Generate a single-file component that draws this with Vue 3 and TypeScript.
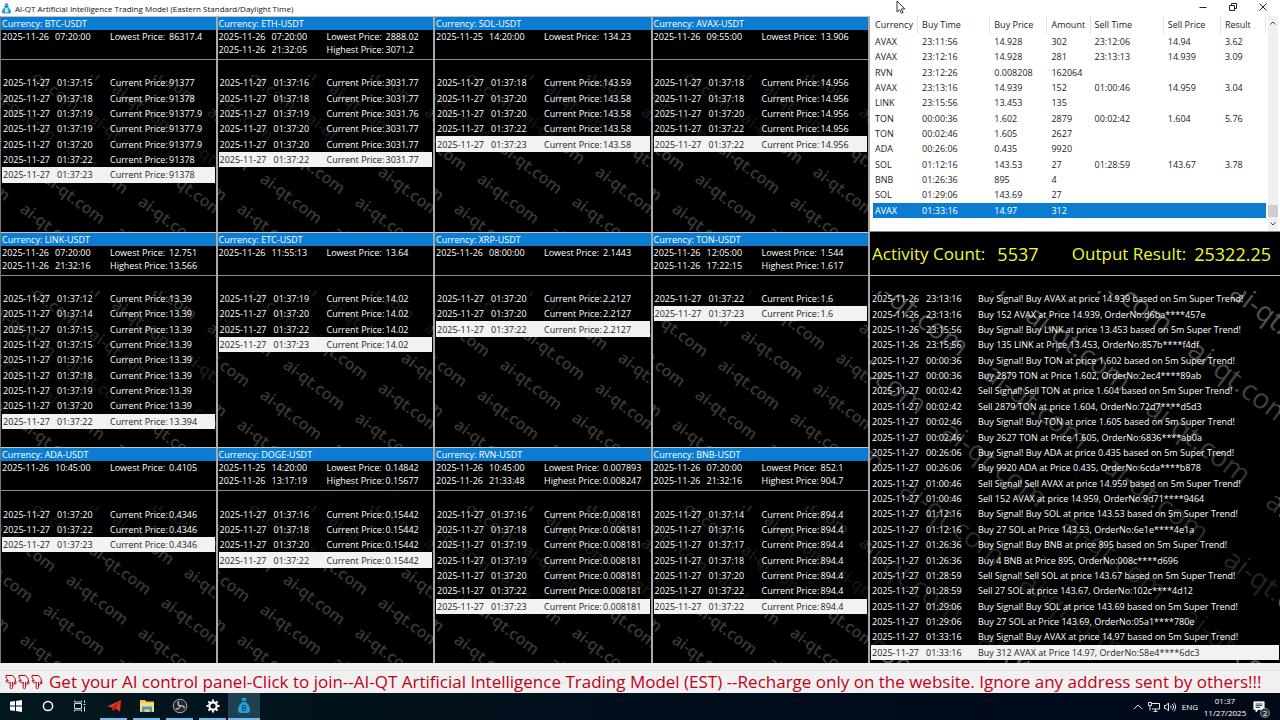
<script setup lang="ts">
interface Quote { date: string; time: string; price: string }
interface Stat { date: string; time: string; label: string; value: string }
interface Panel { pair: string; stats: Stat[]; quotes: Quote[] }

const DAY = '2025-11-27'

function stat(label: string, [at, value]: string[]): Stat {
  const [date, time] = at.split(' ')
  return { date, time, label, value }
}

function panel(pair: string, low: string[], high: string[] | null, ticks: string): Panel {
  const stats = [stat('Lowest Price:', low)]
  if (high) stats.push(stat('Highest Price:', high))
  const quotes = ticks.split(' ').map((t) => {
    const [sec, price] = t.split('/')
    return { date: DAY, time: `01:37:${sec}`, price }
  })
  return { pair, stats, quotes }
}

const panels: Panel[] = [
  panel('BTC-USDT', ['2025-11-26 07:20:00', '86317.4'], null,
    '15/91377 18/91378 19/91377.9 19/91377.9 20/91377.9 22/91378 23/91378'),
  panel('ETH-USDT', ['2025-11-26 07:20:00', '2888.02'], ['2025-11-26 21:32:05', '3071.2'],
    '16/3031.77 18/3031.77 19/3031.76 20/3031.77 20/3031.77 22/3031.77'),
  panel('SOL-USDT', ['2025-11-25 14:20:00', '134.23'], null,
    '18/143.59 20/143.58 20/143.58 22/143.58 23/143.58'),
  panel('AVAX-USDT', ['2025-11-26 09:55:00', '13.906'], null,
    '18/14.956 18/14.956 20/14.956 22/14.956 22/14.956'),
  panel('LINK-USDT', ['2025-11-26 07:20:00', '12.751'], ['2025-11-26 21:32:16', '13.566'],
    '12/13.39 14/13.39 15/13.39 15/13.39 16/13.39 18/13.39 19/13.39 20/13.39 22/13.394'),
  panel('ETC-USDT', ['2025-11-26 11:55:13', '13.64'], null,
    '19/14.02 20/14.02 22/14.02 23/14.02'),
  panel('XRP-USDT', ['2025-11-26 08:00:00', '2.1443'], null,
    '20/2.2127 20/2.2127 22/2.2127'),
  panel('TON-USDT', ['2025-11-26 12:05:00', '1.544'], ['2025-11-26 17:22:15', '1.617'],
    '22/1.6 23/1.6'),
  panel('ADA-USDT', ['2025-11-26 10:45:00', '0.4105'], null,
    '20/0.4346 22/0.4346 23/0.4346'),
  panel('DOGE-USDT', ['2025-11-25 14:20:00', '0.14842'], ['2025-11-26 13:17:19', '0.15677'],
    '16/0.15442 18/0.15442 20/0.15442 22/0.15442'),
  panel('RVN-USDT', ['2025-11-26 10:45:00', '0.007893'], ['2025-11-26 21:33:48', '0.008247'],
    '16/0.008181 18/0.008181 19/0.008181 19/0.008181 20/0.008181 22/0.008181 23/0.008181'),
  panel('BNB-USDT', ['2025-11-26 07:20:00', '852.1'], ['2025-11-26 21:32:16', '904.7'],
    '14/894.4 16/894.4 17/894.4 18/894.4 20/894.4 22/894.4 22/894.4'),
]

const columns = ['Currency', 'Buy Time', 'Buy Price', 'Amount', 'Sell Time', 'Sell Price', 'Result']
const trades: string[][] = [
  ['AVAX', '23:11:56', '14.928', '302', '23:12:06', '14.94', '3.62'],
  ['AVAX', '23:12:16', '14.928', '281', '23:13:13', '14.939', '3.09'],
  ['RVN', '23:12:26', '0.008208', '162064', '', '', ''],
  ['AVAX', '23:13:16', '14.939', '152', '01:00:46', '14.959', '3.04'],
  ['LINK', '23:15:56', '13.453', '135', '', '', ''],
  ['TON', '00:00:36', '1.602', '2879', '00:02:42', '1.604', '5.76'],
  ['TON', '00:02:46', '1.605', '2627', '', '', ''],
  ['ADA', '00:26:06', '0.435', '9920', '', '', ''],
  ['SOL', '01:12:16', '143.53', '27', '01:28:59', '143.67', '3.78'],
  ['BNB', '01:26:36', '895', '4', '', '', ''],
  ['SOL', '01:29:06', '143.69', '27', '', '', ''],
  ['AVAX', '01:33:16', '14.97', '312', '', '', ''],
]

const signal = (side: string, coin: string, price: string) =>
  `${side} Signal! ${side} ${coin} at price ${price} based on 5m Super Trend!`

const log: string[][] = [
  ['2025-11-26', '23:13:16', signal('Buy', 'AVAX', '14.939')],
  ['2025-11-26', '23:13:16', 'Buy 152 AVAX at Price 14.939, OrderNo:d6ba****457e'],
  ['2025-11-26', '23:15:56', signal('Buy', 'LINK', '13.453')],
  ['2025-11-26', '23:15:56', 'Buy 135 LINK at Price 13.453, OrderNo:857b****f4df'],
  [DAY, '00:00:36', signal('Buy', 'TON', '1.602')],
  [DAY, '00:00:36', 'Buy 2879 TON at Price 1.602, OrderNo:2ec4****89ab'],
  [DAY, '00:02:42', signal('Sell', 'TON', '1.604')],
  [DAY, '00:02:42', 'Sell 2879 TON at price 1.604, OrderNo:72d7****d5d3'],
  [DAY, '00:02:46', signal('Buy', 'TON', '1.605')],
  [DAY, '00:02:46', 'Buy 2627 TON at Price 1.605, OrderNo:6836****ab0a'],
  [DAY, '00:26:06', signal('Buy', 'ADA', '0.435')],
  [DAY, '00:26:06', 'Buy 9920 ADA at Price 0.435, OrderNo:6cda****b878'],
  [DAY, '01:00:46', signal('Sell', 'AVAX', '14.959')],
  [DAY, '01:00:46', 'Sell 152 AVAX at price 14.959, OrderNo:9d71****9464'],
  [DAY, '01:12:16', signal('Buy', 'SOL', '143.53')],
  [DAY, '01:12:16', 'Buy 27 SOL at Price 143.53, OrderNo:6e1e****4e1a'],
  [DAY, '01:26:36', signal('Buy', 'BNB', '895')],
  [DAY, '01:26:36', 'Buy 4 BNB at Price 895, OrderNo:008c****d696'],
  [DAY, '01:28:59', signal('Sell', 'SOL', '143.67')],
  [DAY, '01:28:59', 'Sell 27 SOL at price 143.67, OrderNo:102c****4d12'],
  [DAY, '01:29:06', signal('Buy', 'SOL', '143.69')],
  [DAY, '01:29:06', 'Buy 27 SOL at Price 143.69, OrderNo:05a1****780e'],
  [DAY, '01:33:16', signal('Buy', 'AVAX', '14.97')],
  [DAY, '01:33:16', 'Buy 312 AVAX at Price 14.97, OrderNo:58e4****6dc3'],
]

// Rows nearer the newest entry hide more of the watermark behind them.
function shade(index: number, total: number, step: number) {
  const age = total - 1 - index
  if (age === 0) return undefined
  return { background: `rgba(0, 0, 0, ${Math.max(0, 0.75 - step * age).toFixed(2)})` }
}

// Watermark copies sit on a slanted lattice: origin plus multiples of two step vectors.
// Copies that would fall wholly outside the given area are left out.
type Vec = [number, number]
function lattice(origin: Vec, a: Vec, b: Vec, run: Vec, area: Vec): string[] {
  const marks: string[] = []
  for (let i = -4; i <= 4; i++) {
    for (let j = -8; j <= 8; j++) {
      const x = origin[0] + i * a[0] + j * b[0]
      const y = origin[1] + i * a[1] + j * b[1]
      if (x > area[0] || y - 12 > area[1] || x + run[0] < 0 || y + run[1] < 0) continue
      marks.push(`translate(${x} ${y}) rotate(37)`)
    }
  }
  return marks
}
const smallMarks = lattice([41, 106], [118, -7], [-23, 30], [60, 45], [216, 157])
const largeMarks = lattice([154, 28], [162, 35], [-42, 58], [102, 77], [411, 372])
</script>

<template>
  <div class="desktop">
    <header class="titlebar">
      <svg class="app-icon" viewBox="0 0 24 24" aria-hidden="true">
        <path d="M8 1h8l-2 5h-4z" fill="#1b8fc4" /><rect x="7" y="6" width="10" height="3" rx="1" fill="#1577a8" />
        <path d="M9 9h6c4 3 7 7 7 10 0 3-2 4-4 4H6c-2 0-4-1-4-4 0-3 3-7 7-10z" fill="#1ba0d8" />
        <path d="M10 12v8M10 12h3a2 2 0 0 1 0 4h-3 3a2 2 0 0 1 0 4h-3" fill="none" stroke="#fff" stroke-width="2" />
      </svg>
      <h1>AI-QT Artificial Intelligence Trading Model (Eastern Standard/Daylight Time)</h1>
      <div class="win-buttons">
        <button type="button" aria-label="Minimize"><svg viewBox="0 0 10 10"><path d="M1.500 5.500h7" /></svg></button>
        <button type="button" aria-label="Restore"><svg viewBox="0 0 10 10"><path d="M1.500 3.500h5v5h-5zM3.500 3.500v-2h5v5h-2" /></svg></button>
        <button type="button" aria-label="Close"><svg viewBox="0 0 10 10"><path d="M1.500 1.500l7 7M8.500 1.500l-7 7" /></svg></button>
      </div>
      <svg class="pointer" viewBox="0 0 10 14" aria-hidden="true">
        <path d="M1 1v11l2.600-2.400 1.700 3.600 1.800-.8-1.700-3.500h3.400z" fill="#fff" stroke="#333" stroke-width="1" />
      </svg>
    </header>

    <main class="workspace">
      <section class="panels">
        <article v-for="p in panels" :key="p.pair" class="panel">
          <h2>Currency: {{ p.pair }}</h2>
          <div class="stats">
            <div v-for="s in p.stats" :key="s.label" class="stat">
              <span>{{ s.date }}</span><span>{{ s.time }}</span><span>{{ s.label }}</span><span>{{ s.value }}</span>
            </div>
          </div>
          <div class="feed">
            <svg class="marks" aria-hidden="true">
              <text v-for="m in smallMarks" :key="m" :transform="m">ai-qt.com</text>
            </svg>
            <ul class="quotes">
              <li
                v-for="(q, i) in p.quotes" :key="i"
                :class="{ latest: i === p.quotes.length - 1 }"
                :style="shade(i, p.quotes.length, 0.08)"
              >
                <span>{{ q.date }}</span><span>{{ q.time }}</span><span>Current Price:</span><span>{{ q.price }}</span>
              </li>
            </ul>
          </div>
        </article>
      </section>

      <section class="side">
        <div class="trades">
          <table>
            <thead>
              <tr><th v-for="c in columns" :key="c" scope="col">{{ c }}</th></tr>
            </thead>
            <tbody>
              <tr v-for="(t, i) in trades" :key="i" :class="{ picked: i === trades.length - 1 }">
                <td v-for="(cell, k) in t" :key="k">{{ cell }}</td>
              </tr>
            </tbody>
          </table>
          <div class="scrollbar">
            <button type="button" aria-label="Scroll up"><svg viewBox="0 0 8 8"><path d="M1.500 5.500L4 3l2.500 2.500" /></svg></button>
            <div class="track"><div class="thumb"></div></div>
            <button type="button" aria-label="Scroll down"><svg viewBox="0 0 8 8"><path d="M1.500 2.500L4 5l2.500-2.500" /></svg></button>
          </div>
        </div>

        <dl class="totals">
          <div><dt>Activity Count:</dt><dd>5537</dd></div>
          <div><dt>Output Result:</dt><dd>25322.25</dd></div>
        </dl>

        <div class="log">
          <svg class="marks large" aria-hidden="true">
            <text v-for="m in largeMarks" :key="m" :transform="m">ai-qt.com</text>
          </svg>
          <ul>
            <li
              v-for="(l, i) in log" :key="i"
              :class="{ latest: i === log.length - 1 }"
              :style="shade(i, log.length, 0.03)"
            >
              <span>{{ l[0] }}</span><span>{{ l[1] }}</span><span>{{ l[2] }}</span>
            </li>
          </ul>
        </div>
      </section>
    </main>

    <a class="notice" href="#join">
      <svg v-for="n in 3" :key="n" viewBox="0 0 12 16" aria-hidden="true">
        <path d="M1 1.500H7.500L10 4.500L11 9Q10.800 10.500 9.400 9.800Q8.800 11 7.500 10.300V13.500Q7.300 14.800 6.300 14.700Q5.200 14.500 5.200 13.500V8L3.500 8.800L1.200 7.500Q.8 6.500 2 6.300L3.300 6.500L1 4zM7.500 10.300V8M9.400 9.800V7.500" />
      </svg>
      <span>Get your AI control panel-Click to join--AI-QT Artificial Intelligence Trading Model (EST) --Recharge only on the website. Ignore any address sent by others!!!</span>
    </a>

    <footer class="taskbar">
      <nav class="apps">
        <button type="button" aria-label="Start"><svg viewBox="0 0 16 16"><path d="M2 3.700l5-.7v4.500H2zM8 2.900L14 2v5.500H8zM2 8.500h5V13l-5-.7zM8 8.500h6V14l-6-.9z" fill="#fff" /></svg></button>
        <button type="button" aria-label="Search"><svg viewBox="0 0 16 16"><circle cx="8" cy="8" r="4.600" fill="none" stroke="#fff" stroke-width="1.500" /></svg></button>
        <button type="button" aria-label="Task view"><svg viewBox="0 0 16 16"><path d="M2.500 2.500v1.500h7V2.500M2.500 13.500V12h7v1.500M2.500 5.500h7v5h-7zM12.500 2.500v2.500M12.500 8.500v5M11.500 6.500h2" fill="none" stroke="#d5dadd" /></svg></button>
        <button type="button" class="open" aria-label="Telegram"><svg viewBox="0 0 16 16"><path d="M1 8.500L15 2l-1 11.500-4.500-3L7 13 6 9.500z" fill="#e8341c" /><path d="M6 9.500l7.500-6-4 7L7 13z" fill="#b3210f" /></svg></button>
        <button type="button" class="open" aria-label="File Explorer"><svg viewBox="0 0 16 16"><path d="M1 2h5l1.500 1.500H15V14H1z" fill="#f5c84b" /><path d="M1 5h14v8H1z" fill="#fbdd78" /><path d="M3 8.500h10V14h-2.500v-2.500h-5V14H3z" fill="#3f9fd0" /></svg></button>
        <button type="button" class="open" aria-label="OBS Studio"><svg viewBox="0 0 16 16"><circle cx="8" cy="8" r="6.800" fill="#25272b" stroke="#a8abb0" stroke-width="1" /><path d="M6.800 3.200c-1.300 2-.8 4 1.200 4.800M8 8c2.200-.8 4.200.2 4.500 2.300M8 8c-.4 2.300-2.200 3.500-4.300 2.700" fill="none" stroke="#b9bcc2" stroke-width="1.400" /></svg></button>
        <button type="button" class="open" aria-label="Settings"><svg viewBox="0 0 16 16"><circle cx="8" cy="8" r="3.700" fill="none" stroke="#fff" stroke-width="2.200" /><path d="M8 1.500v2M8 12.500v2M1.500 8h2M12.500 8h2M3.400 3.400l1.400 1.400M11.200 11.200l1.400 1.400M12.600 3.400l-1.400 1.400M4.800 11.200l-1.400 1.400" stroke="#fff" stroke-width="2" /></svg></button>
        <button type="button" class="open current" aria-label="AI-QT"><svg viewBox="0 0 16 16"><path d="M5.500 0h5L9.500 3h-3z" fill="#23a0da" /><path d="M6 4h4c2.500 2.500 4 5 4 8 0 2-1 3-2.500 3h-7C3 15 2 14 2 12c0-3 1.500-5.500 4-8z" fill="#23a0da" /><path d="M6.500 7v6M6.500 7.500h2a1.200 1.200 0 0 1 0 2.500h-2 2.500a1.300 1.300 0 0 1 0 2.500H6.500" fill="none" stroke="#0c4f74" stroke-width="1" /></svg></button>
      </nav>
      <div class="tray">
        <button type="button" aria-label="Show hidden icons"><svg viewBox="0 0 12 12"><path d="M2 8l4-4 4 4" /></svg></button>
        <button type="button" aria-label="Network"><svg viewBox="0 0 12 12"><path d="M4 2.500h7.500v5.500H4M5.500 10.500h4M7.500 8v2.500M.5 1.500h3v3h-3zM2 4.500v5" /></svg></button>
        <button type="button" aria-label="Volume"><svg viewBox="0 0 12 12"><path d="M.5 4.500h1.500L4.500 2v8L2 7.500H.5zM6.500 4.500c.8 1 .8 2 0 3M8.200 3c1.700 2 1.700 4 0 6M10 1.700c2 2.600 2 6 0 8.600" /></svg></button>
        <button type="button" class="lang">ENG</button>
        <button type="button" class="clock"><time>01:37</time><time>11/27/2025</time></button>
        <button type="button" class="alerts" aria-label="2 notifications">
          <svg viewBox="0 0 14 14"><path d="M1 1h12v9H6l-2.500 3v-3H1z" fill="#fff" /><path d="M3 3.500h8M3 5.500h8M3 7.500h5" stroke="#0a1220" /></svg>
          <span class="badge">2</span>
        </button>
      </div>
    </footer>
  </div>
</template>

<style>
body { margin: 0; background: #000; }
</style>

<style scoped>
.desktop {
  display: flex; flex-direction: column; min-height: 100vh; overflow: hidden;
  font-family: "Open Sans", "Noto Sans", sans-serif; font-size: 9px; line-height: 13px;
  background: #f0f0f0; color: #fff; white-space: nowrap;
}
h1, h2, ul, dl, dd { margin: 0; padding: 0; font: inherit; list-style: none; }
button { border: 0; padding: 0; margin: 0; background: none; font: inherit; color: inherit; display: flex; align-items: center; justify-content: center; }

.titlebar { position: relative; display: flex; align-items: center; gap: 3px; height: 16px; padding: 0 2px 0 1px; background: #fff; color: #111; }
.app-icon { width: 11px; height: 11px; }
.titlebar h1 { font-size: 8px; flex: 1; }
.win-buttons { display: flex; align-self: flex-start; }
.win-buttons button { width: 30px; height: 14px; }
.win-buttons svg { width: 10px; height: 10px; fill: none; stroke: #222; stroke-width: 1; }
.pointer { position: absolute; left: 70%; top: 0; width: 10px; height: 14px; }

.workspace { flex: 1; display: grid; grid-template-columns: 870fr 410fr; }
.panels { display: grid; grid-template-columns: repeat(4, 1fr); grid-template-rows: repeat(3, 1fr); background: #000; }
.panel { display: flex; flex-direction: column; border-right: 2px solid #a9a9a9; border-top: 1px solid #c4c4c4; min-width: 0; }
.panel:nth-child(4n + 1) { border-left: 1px solid #777; }
.panel h2 { height: 13px; padding-left: 1px; background: #0a7dd3; }
.stats { height: 29px; border-bottom: 1px solid #8c8c8c; padding-left: 1px; }
.stat { display: grid; grid-template-columns: 53px 55px 59px 1fr; }
.feed { position: relative; flex: 1; display: flex; flex-direction: column; padding: 15px 1px 3px; overflow: hidden; }
.marks { position: absolute; left: 0; top: 15px; width: 100%; height: calc(100% - 15px); overflow: hidden; font-size: 16px; font-weight: 600; fill: #383838; }
.quotes { position: relative; flex: 1; display: grid; grid-template-rows: repeat(10, 1fr); }
.quotes li { display: grid; grid-template-columns: 54px 53px 59px 1fr; align-items: center; padding-left: 1px; }
.latest { background: #f2f2f2; color: #222; }

.side { display: flex; flex-direction: column; background: #000; min-width: 0; }
.trades { display: flex; height: 215px; background: #fff; color: #222; border-bottom: 1px solid #888; }
table { display: flex; flex-direction: column; flex: 1; padding-left: 3px; margin-right: 2px; }
thead, tbody { display: grid; }
thead { height: 18px; line-height: 18px; }
tbody { height: 184px; grid-template-rows: repeat(12, 1fr); }
tr { display: grid; grid-template-columns: 45fr 72fr 57fr 43fr 73fr 57fr 45fr; align-items: center; }
th, td { padding: 0 0 0 4px; font-weight: 400; text-align: left; min-width: 0; }
th { border-right: 1px solid #e4e4e4; }
th:first-child, td:first-child { padding-left: 2px; }
.picked { background: #0a7dd3; color: #fff; }
.scrollbar { width: 10px; margin-right: 2px; display: flex; flex-direction: column; background: #f0f0f0; }
.scrollbar button { height: 14px; }
.scrollbar svg { width: 8px; height: 8px; fill: none; stroke: #444; }
.track { flex: 1; display: flex; flex-direction: column; justify-content: flex-end; }
.thumb { height: 12px; background: #cdcdcd; }

.totals { display: flex; justify-content: space-between; align-items: center; height: 43px; padding: 0 9px 0 2px; border-bottom: 1px solid #b8b8b8; color: #f0f832; font-size: 17px; line-height: 24px; }
.totals div { display: flex; gap: 12px; align-items: center; }
.totals div + div { gap: 8px; }
.totals dd { font-size: 18px; }
.log { position: relative; flex: 1; display: flex; padding: 15px 1px 3px; overflow: hidden; }
.large { font-size: 28px; font-weight: 400; fill: #585858; }
.log ul { position: relative; flex: 1; display: grid; grid-template-rows: repeat(24, 1fr); }
.log li { display: grid; grid-template-columns: 54px 52px 1fr; align-items: center; padding-left: 1px; }

.notice { display: flex; align-items: center; gap: 1px; height: 22px; margin-top: 7px; padding-left: 5px; border-top: 1px solid #e2e2e2; color: #c00018; font-size: 17px; line-height: 22px; text-decoration: none; overflow: hidden; }
.notice svg { width: 12px; height: 16px; flex: none; fill: none; stroke: #c00018; stroke-width: 1; }
.notice span { margin-left: 5px; }

.taskbar { display: flex; justify-content: space-between; height: 27px; background: linear-gradient(90deg, #02171d, #020c1c 60%, #020a1a); }
.apps { display: flex; padding-right: 8px; }
.apps button { width: 32px; box-sizing: border-box; border-bottom: 2px solid transparent; }
.apps .open { width: 27px; margin: 0 2px 0 4px; border-color: #76b9ed; }
.apps .current { width: 32px; background: #1f4152; margin: 0; }
.apps svg { width: 16px; height: 16px; }
.tray { display: flex; align-items: center; }
.tray > button { width: 16px; height: 24px; }
.tray svg { width: 12px; height: 12px; fill: none; stroke: #e8eaec; stroke-width: 1; }
.tray .lang { width: 24px; font-size: 8px; }
.tray .clock { width: 46px; flex-direction: column; line-height: 12px; font-size: 8px; }
.tray .alerts { position: relative; width: 22px; margin-right: 10px; }
.badge { position: absolute; right: 0; bottom: 1px; width: 10px; height: 10px; border-radius: 5px; background: #30343c; border: 1px solid #888; box-sizing: border-box; font-size: 8px; line-height: 8px; text-align: center; }
</style>
